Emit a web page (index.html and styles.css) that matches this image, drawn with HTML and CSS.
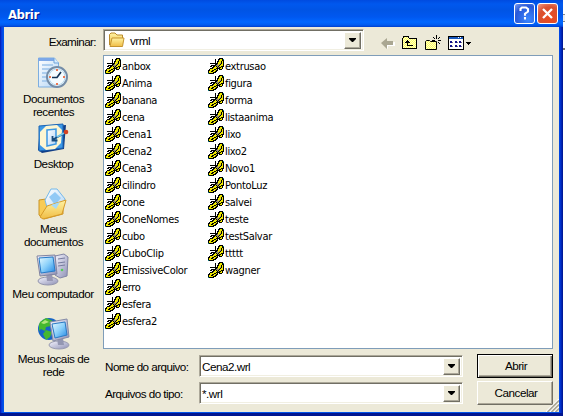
FILE: index.html
```
<!DOCTYPE html>
<html lang="pt">
<head>
<meta charset="utf-8">
<title>Abrir</title>
<link rel="stylesheet" href="styles.css">
</head>
<body>
<svg class="defs" width="0" height="0">
<defs>
<linearGradient id="blue" x1="0" y1="0" x2="1" y2="1"><stop offset="0" stop-color="#e8faff"/><stop offset=".5" stop-color="#8ad0fa"/><stop offset="1" stop-color="#2387e4"/></linearGradient>
<linearGradient id="paper" x1="0" y1="0" x2="1" y2="1"><stop offset="0" stop-color="#fff"/><stop offset="1" stop-color="#b3d5f5"/></linearGradient>
<linearGradient id="gold" x1="0" y1="0" x2="0" y2="1"><stop offset="0" stop-color="#fff3a3"/><stop offset="1" stop-color="#f0bd45"/></linearGradient>
<linearGradient id="grey" x1="0" y1="0" x2="1" y2="1"><stop offset="0" stop-color="#f5f5ff"/><stop offset="1" stop-color="#8d8fb4"/></linearGradient>
<pattern id="dither" width="2" height="2" patternUnits="userSpaceOnUse"><path fill="#ffff60" d="M0 0h2v2H0z"/><path fill="#ffffc8" d="M0 0h1v1H0zM1 1h1v1H1z"/></pattern>
<symbol id="bug" viewBox="0 0 16 16"></symbol>
</defs>
</svg>
<div class="desktop">
<div class="window">
<header class="titlebar"><h1>Abrir</h1><button class="cap help"><svg width="19" height="19" viewBox="0 0 19 19"><path d="M5.500 7V4.800L7 3.500h4l2 1.500v2.500l-3 2.200v2.100M10 13v2.400" fill="none" stroke="#fff" stroke-width="2.100"/></svg></button><button class="cap close"><svg width="19" height="19" viewBox="0 0 19 19"><path d="M5 5l9 9M14 5l-9 9" stroke="#fff" stroke-width="2.300"/></svg></button></header>
<main class="client">
<div class="lookin">
<label>Examinar:</label>
<div class="combo top"><svg width="18" height="16" viewBox="0 0 18 16"><path d="M1.500 13V2.500L3 1h4l2 2h5.500v3" fill="url(#gold)" stroke="#b98a2b"/><path d="M2 14.500L4 6h12l-1.500 8.500z" fill="url(#gold)" stroke="#c5942f"/></svg><span class="val">vrml</span><i class="drop"></i></div>
<div class="tools">
<svg width="14" height="14" viewBox="0 0 14 14"><path d="M2 8l5 5v-3h7V6" fill="#fff"/><path d="M0 7l6-5v3h6v4H6v4z" fill="#aaa792"/></svg>
<svg width="16" height="14" viewBox="0 0 16 14"><path d="M.5 12.500v-10l1-1V.5h5v1l1 1h7v10z" fill="url(#dither)" stroke="#000"/><path d="M3 6h1V5h1V4h1v1h1v1h1v1H6v2h5v1H5V7H3z"/></svg>
<svg width="16" height="16" viewBox="0 0 16 16"><path d="M.5 14.500v-8l1-1h3l1 1h6v8z" fill="url(#dither)" stroke="#000"/><path d="M11.500 0v4m0 3v3M7 5.500h3m3 0h3M8 2l2 2m3 3l2 2M15 2l-2 2" stroke="#000" fill="none"/></svg>
<svg width="23" height="15" viewBox="0 0 23 15"><path d="M.5.500h15v13H.5z" fill="#fff" stroke="#000"/><path d="M1 1h14v2H1z" fill="#1758bd"/><path d="M10 1h1v1h-1zM12 1h1v1h-1z" fill="#fff"/><path d="M2 5h2v2H2zM7 5h2v2H7zM11 5h2v2h-2zM2 9h2v2H2zM7 9h2v2H7zM11 9h2v2h-2z" fill="#10108a"/><path d="M4 6.500h1M9 6.500h1M13 6.500h1M4 10.500h1M9 10.500h1M13 10.500h1" stroke="#777"/><path d="M18 6h5v1h-1v1h-1v1h-1V8h-1V7h-1z"/></svg>
</div>
</div>
<div class="middle">
<nav class="places">
<a class="p1"><svg width="32" height="32" viewBox="0 0 32 32"><path d="M1.500 1h16l4 5v24h-20z" fill="url(#paper)" stroke="#7daee0"/><path d="M1 1h16v3H1z" fill="#7ca8e8"/><path d="M5 8h11M5 12h10M5 16h6M5 20h5M5 24h5" stroke="#9ac2ea" stroke-width="1.500"/><path d="M17 1v5h5" fill="#d9ecff" stroke="#6fa4d9"/><circle cx="20" cy="20" r="10" fill="#f5fcff" stroke="#748da8" stroke-width="2"/><circle cx="20" cy="20" r="8" fill="none" stroke="#b7d9ee"/><path d="M20 12v2M20 26v2M12 20h2M26 20h2" stroke="#ed7651" stroke-width="2"/><path d="M24 15l-4 5.500h-5" fill="none" stroke="#153456" stroke-width="1.700"/></svg><span>Documentos<br>recentes</span></a>
<a class="p2"><svg width="32" height="32" viewBox="0 0 32 32"><path d="M3 5l26-2-2 24-22 4-4-3z" fill="#123f87"/><path d="M2 4l24-2v24L2 29z" fill="#3d98e6" stroke="#1b64b5"/><path d="M9 4l11-1 5 5-1 13-6 6-9 1-6-5V10z" fill="#fdf6d2"/><path d="M10 8l9-1v15l-9 2z" fill="url(#paper)" stroke="#3c98e3" stroke-width="1.500"/><path d="M15 18l13-7M15.500 14v4.500h5" stroke="#174c7d" stroke-width="1.800" fill="none"/><path d="M20 15l7-4" stroke="#74c6ed" stroke-width="2"/><circle cx="29" cy="10" r="2.300" fill="#d64222"/></svg><span>Desktop</span></a>
<a class="p3"><svg width="32" height="32" viewBox="0 0 32 32"><path d="M2 27V12l7-1 3 3 14-1v13L7 31z" fill="#f8cb55" stroke="#c99428"/><path d="M8 12L14 1l6 0 8 10-4 11-13 1z" fill="url(#paper)" stroke="#75b9ea"/><path d="M12 9l6-5 6 6-6 7z" fill="#91c9f5"/><path d="M3 29l7-11 19-6-4 14-19 5z" fill="url(#gold)" stroke="#d79b29"/><path d="M14 17l9-3-4 7z" fill="#a6daf7"/></svg><span>Meus<br>documentos</span></a>
<a class="p4"><svg width="34" height="33" viewBox="0 0 34 33"><path d="M19 3l9-2 4 3-1 19-7 2-5-3z" fill="url(#grey)" stroke="#8285a5"/><path d="M22 6l7-1M22 10l7-1M22 13l7-1" stroke="#777c9f"/><circle cx="26" cy="17" r="1.300" fill="#56cc58"/><ellipse cx="12" cy="28" rx="10" ry="4" fill="url(#grey)" stroke="#9294ac"/><path d="M10 20h6l1 8h-6z" fill="#9898b3"/><path d="M1 3l18-1 2 19-17 2z" fill="url(#grey)" stroke="#8184a1"/><path d="M3 5l14-1 2 14-14 2z" fill="url(#blue)" stroke="#267bc8"/></svg><span>Meu computador</span></a>
<a class="p5"><svg width="34" height="34" viewBox="0 0 34 34"><circle cx="12" cy="12" r="11" fill="#1764c5"/><path d="M3 5l6-4 7 3-2 5-5 1-1 4-4-2-2 2V8zM9 13l6 2-2 5-4 3-3-6z" fill="#45b82e"/><path d="M4 6l4-3 4 2-5 2z" fill="#b2e67b"/><ellipse cx="22" cy="28" rx="10" ry="4" fill="url(#grey)" stroke="#999bb1"/><path d="M20 21h6l1 7h-6z" fill="#9396b1"/><path d="M13 5l17-3 2 18-16 4z" fill="url(#grey)" stroke="#858ba6"/><path d="M15 7l13-2 2 13-12 3z" fill="url(#blue)" stroke="#297bc5"/></svg><span>Meus locais de<br>rede</span></a>
</nav>
<section class="right">
<ul class="files" id="files"></ul>
<div class="form">
<label class="l1">Nome do arquivo:</label><div class="combo"><span class="val">Cena2.wrl</span><i class="drop"></i></div><button class="btn default"><span>Abrir</span></button>
<label class="l2">Arquivos do tipo:</label><div class="combo"><span class="val">*.wrl</span><i class="drop"></i></div><button class="btn"><span>Cancelar</span></button>
</div>
</section>
</div>
<svg class="grip" width="13" height="13" viewBox="0 0 13 13"><path d="M0 13L13 0M4 13l9-9M8 13l5-5" stroke="#fff" stroke-width="1.300"/><path d="M1.500 13L13 1.500M5.500 13L13 5.500M9.500 13L13 9.500" stroke="#aaa795" stroke-width="1.700"/></svg>
</main>
</div>
<div class="behind"></div>
</div>
<script src="files.js"></script>
</body>
</html>
```
FILE: styles.css
```
*{box-sizing:border-box}
body{margin:0;background:#fff;overflow:hidden;font:11.7px/13px "Liberation Sans",sans-serif;color:#000}
.defs{position:absolute}
svg{display:block;flex:none}
#bug,.tools svg:nth-child(2),.tools svg:nth-child(4),.files svg{shape-rendering:crispEdges}
.desktop{display:flex;width:565px;height:416px}
.window{width:563px;height:416px;display:flex;flex-direction:column;background:linear-gradient(90deg,#0017a0 0,#0831d9 1px,#0054e9 3px,#0054e9 559px,#0138dc 560px,#00138c 563px);padding:0 4px 4px;box-shadow:inset 0 -3px #001590}
.behind{width:2px;background:linear-gradient(#fff 0 14px,#888 14px 15px,#eee 15px 21px,#888 21px 22px,#fff 22px 48px,#777 48px 50px,#fff 50px)}
.titlebar{height:27px;flex:none;margin:0 -4px;padding:0 5px 0 8px;display:flex;align-items:center;background:linear-gradient(#004be0 0,#0058ee 4px,#0054e5 10px,#0058f0 17px,#0066ff 22px,#005bf0 25px,#003dcc 27px)}
h1{margin:2px auto 0 0;font:bold 13px/18px "DejaVu Sans Condensed",sans-serif;letter-spacing:-.45px;color:#fff;text-shadow:1px 1px #00158a}
.cap{width:21px;height:21px;padding:0;border:1px solid #fff;border-radius:3px;margin-left:2px}
.help{background:radial-gradient(circle at 70% 80%,#3c88ff,#2858d8 65%,#7c9df0)}
.close{background:radial-gradient(circle at 65% 75%,#eb4b20,#d95130 60%,#f39b86)}
.client{height:385px;background:#ece9d8;position:relative}
.lookin{height:28px;padding-top:2px;display:flex}
.lookin label{width:99px;padding:6px 7px 0 0;text-align:right;letter-spacing:-.6px}
.combo{width:264px;height:22px;background:#fff;border:1px solid;border-color:#aca899 #fff #fff #aca899;box-shadow:inset 1px 1px #716f64,inset -1px -1px #f1efe2;display:flex;padding:2px;align-items:center}
.combo.top{width:261px;padding-left:4px}
.val{flex:1;letter-spacing:-.5px;white-space:nowrap}
.top .val{padding-left:4px}
.drop{width:17px;height:17px;background:#ece9d8;border:1px solid;border-color:#fff #716f64 #716f64 #fff;box-shadow:inset -1px -1px #aca899;display:flex;align-items:center;justify-content:center}
.drop::after{content:"";width:7px;height:4px;background:#000;clip-path:polygon(0 0,100% 0,100% 1px,4px 100%,3px 100%,0 1px)}
.tools{display:flex;align-items:center;margin:6px 0 0 17px;height:16px;gap:7px}
.middle{display:flex;height:357px}
.places{width:99px;display:flex;flex-direction:column;text-align:center;letter-spacing:-.45px}
.places a{display:flex;flex-direction:column;align-items:center;gap:3px}
.places svg{margin-left:-2px}
.p1{height:67px;padding-top:2px}.p2{height:64px}.p3{height:67px;padding-top:2px}.p4{height:64px}
.places .p3 span{margin-top:-1px}
.p4 span{white-space:nowrap;margin-left:-1px;margin-top:-2px}
.places .p5 svg{margin-left:1px}
.places .p5 span{margin-top:-2px}
.right{width:450px}
.files{height:294px;margin:0;padding:2px 0 0 1px;list-style:none;background:#fff;border:1px solid #7f9db9;display:grid;grid-auto-flow:column;grid-template-rows:repeat(16,17px);grid-auto-columns:103px;align-content:start;font:11px/16px "DejaVu Sans Condensed",sans-serif}
.files li{display:flex;gap:1px;white-space:nowrap;letter-spacing:-.32px}
.files span{padding-top:1px}
.form{display:grid;grid-template-columns:96px 263px 91px;grid-template-rows:22px 22px;row-gap:5px;margin-top:6px;align-items:center}
.form label{padding:1px 0 0 2px;letter-spacing:-.55px;white-space:nowrap}
.btn{width:76px;height:24px;margin-left:15px;padding:0;border:1px solid;border-color:#fff #716f64 #716f64 #fff;box-shadow:inset -1px -1px #aca899;background:#ece9d8;font:inherit;letter-spacing:-.5px;color:#000}
.default{border-color:#000;box-shadow:inset 1px 1px #fff,inset -1px -1px #716f64,inset -2px -2px #aca899}
.btn span{position:relative;top:-1px;left:1px}
.grip{position:absolute;right:0;bottom:0}
```
FILE: files.js
```
// Butterfly file icon, one character per pixel
const bug = [
"...........KKKK.",
".......K..KKYYKT",
".......K..KYYYKK",
".......K.KKYYKYK",
".......K.KYYYKYK",
"..KKKKKKKKYYGKYK",
".......KKGYGKYYK",
"...KKKKKGGGKYYYK",
"..KK.KKYKGKYYKKK",
"....KKYYYKGKKYK.",
"..KKKYYYKKKKYYK.",
".KYYYYKKYK.KKK..",
"KKYYKKYYKK......",
"KYYKKYYKK.......",
"KYYYYKKK........",
"TKKKKK.........."];
const inks = {K: "#000", Y: "#eee800", G: "#99906a", T: "#087c7c"};
document.getElementById("bug").innerHTML = Object.keys(inks).map(k => {
  let d = "";
  bug.forEach((row, y) => [...row].forEach((c, x) => { if (c === k) d += `M${x} ${y}h1v1h-1z`; }));
  return `<path fill="${inks[k]}" d="${d}"/>`;
}).join("");

const names = ["anbox","Anima","banana","cena","Cena1","Cena2","Cena3","cilindro","cone","ConeNomes","cubo","CuboClip","EmissiveColor","erro","esfera","esfera2","extrusao","figura","forma","listaanima","lixo","lixo2","Novo1","PontoLuz","salvei","teste","testSalvar","ttttt","wagner"];
document.getElementById("files").innerHTML = names.map(name =>
  `<li><svg width="16" height="16"><use href="#bug"/></svg><span>${name}</span></li>`
).join("");
```
